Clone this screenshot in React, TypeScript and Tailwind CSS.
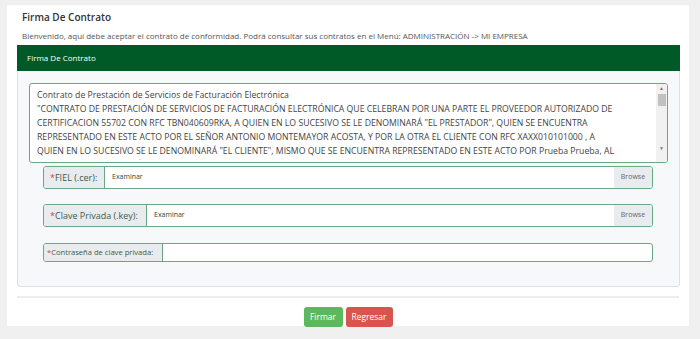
import React from 'react'

const lineas = [
  'Contrato de Prestación de Servicios de Facturación Electrónica',
  '"CONTRATO DE PRESTACIÓN DE SERVICIOS DE FACTURACIÓN ELECTRÓNICA QUE CELEBRAN POR UNA PARTE EL PROVEEDOR AUTORIZADO DE',
  'CERTIFICACION 55702 CON RFC TBN040609RKA, A QUIEN EN LO SUCESIVO SE LE DENOMINARÁ "EL PRESTADOR", QUIEN SE ENCUENTRA',
  'REPRESENTADO EN ESTE ACTO POR EL SEÑOR ANTONIO MONTEMAYOR ACOSTA, Y POR LA OTRA EL CLIENTE CON RFC XAXX010101000 , A',
  'QUIEN EN LO SUCESIVO SE LE DENOMINARÁ "EL CLIENTE", MISMO QUE SE ENCUENTRA REPRESENTADO EN ESTE ACTO POR Prueba Prueba, AL',
  'CUAL SE LE DENOMINARÁ DE MANERA CONJUNTA COMO "LAS PARTES".',
]

function CampoArchivo({ label, labelW }: { label: string; labelW: string }) {
  return (
    <div className="flex h-[23px] border border-[#6aa884] rounded-[3px] overflow-hidden bg-white">
      <div className={`${labelW} shrink-0 whitespace-nowrap flex items-center pl-[6px] bg-[#e9ecef] border-r border-[#6aa884] text-[9px] text-[#3d5a48]`}>
        <span className="text-[#e03c3c]">*</span>
        {label}
      </div>
      <div className="flex-1 flex items-start pt-[5px] pl-[7px] text-[7px] leading-[9px] text-[#1f4d30]">Examinar</div>
      <div className="w-[38px] flex items-start justify-center pt-[5px] bg-[#e9ecef] text-[7px] leading-[9px] text-[#666]">Browse</div>
    </div>
  )
}

export default function App() {
  return (
    <div className="w-[700px] h-[339px] bg-[#f0f0f0] pt-[5px] pl-[7px] font-['Open_Sans',sans-serif] overflow-hidden">
      <div className="w-[682px] h-[321px] bg-white px-[10px]">
        <h1 className="pt-[5px] pl-[5px] text-[10px] font-semibold text-[#333] leading-[15px]">Firma De Contrato</h1>
        <p className="mt-[5px] pl-[5px] text-[8px] text-[#555] leading-[12px] whitespace-nowrap">
          Bienvenido, aquí debe aceptar el contrato de conformidad. Podrá consultar sus contratos en el Menú: ADMINISTRACIÓN -&gt; MI EMPRESA
        </p>

        <div className="mt-[3px] w-[663px] border border-[#dde1e5] rounded-b-[3px] bg-[#f7f8fa]">
          <div className="h-[26px] -m-px mb-0 bg-[#005a27] flex items-center pl-[10px] text-[8px] text-white">
            Firma De Contrato
          </div>

          <div className="pt-[12px] px-[11px] pb-[24px]">
            {/* contrato con scroll */}
            <div className="relative h-[80px] border border-[#6aa884] rounded-[3px] bg-white overflow-hidden">
              <div className="h-[76px] overflow-hidden pt-[4px] pl-[7px] pr-[14px] text-[8.7px] leading-[14px] text-[#444]">
                {lineas.map((l, i) => (
                  <div key={i} className="whitespace-nowrap">{l}</div>
                ))}
              </div>
              <div className="absolute top-0 right-0 w-[11px] h-full bg-[#f1f1f1] flex flex-col items-center">
                <div className="h-[10px] flex items-center text-[5px] text-[#777]">▲</div>
                <div className="w-[8px] h-[12px] bg-[#c1c1c1]" />
                <div className="flex-1" />
                <div className="h-[10px] flex items-center text-[5px] text-[#777]">▼</div>
                <div className="h-[8px]" />
              </div>
            </div>

            <div className="ml-[14px] mr-[15px] mt-[3px] flex flex-col">
              <CampoArchivo label="FIEL (.cer):" labelW="w-[61px]" />
              <div className="h-[15px]" />
              <CampoArchivo label="Clave Privada (.key):" labelW="w-[103px]" />
              <div className="h-[16px]" />
              <div className="flex h-[19px] border border-[#6aa884] rounded-[3px] overflow-hidden bg-white">
                <div className="w-[119px] shrink-0 whitespace-nowrap flex items-center pl-[3px] bg-[#e9ecef] border-r border-[#6aa884] text-[7.6px] text-[#3d5a48]">
                  <span className="text-[#e03c3c]">*</span>
                  Contraseña de clave privada:
                </div>
                <input type="password" className="flex-1 min-w-0 outline-none" />
              </div>
            </div>
          </div>
        </div>

        <div className="mt-[9px] border-t-2 border-[#eeeeee]" />

        <div className="mt-[9px] flex justify-center gap-[3px]">
          <button className="w-[39px] h-[20px] rounded-[3px] bg-[#5cb85c] text-white text-[8.5px]">Firmar</button>
          <button className="w-[47px] h-[20px] rounded-[3px] bg-[#d9534f] text-white text-[8.5px]">Regresar</button>
        </div>
      </div>
    </div>
  )
}
